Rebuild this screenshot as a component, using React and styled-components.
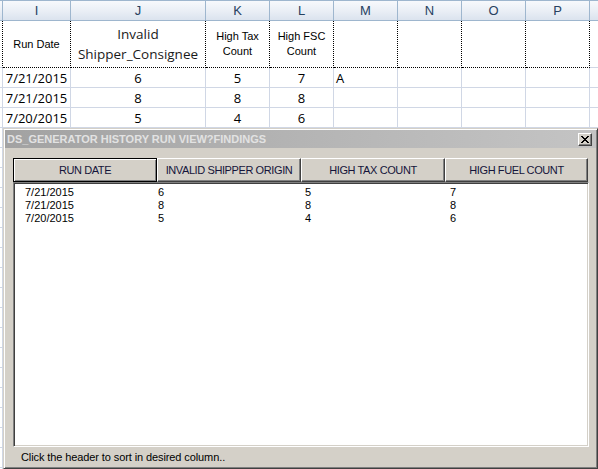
import React from "react";
import styled, { createGlobalStyle, css } from "styled-components";

const Global = createGlobalStyle`
  html, body { margin: 0; padding: 0; background: #ffffff; }
  body { overflow: hidden; }
  #root { position: relative; width: 598px; height: 469px; overflow: hidden; }
`;

const columns = [
  { key: "H", w: 3 },
  { key: "I", w: 68 },
  { key: "J", w: 135 },
  { key: "K", w: 64 },
  { key: "L", w: 64 },
  { key: "M", w: 64 },
  { key: "N", w: 64 },
  { key: "O", w: 64 },
  { key: "P", w: 64 },
  { key: "Q", w: 64 },
];

const Sheet = styled.div`
  display: flex;
  flex-direction: column;
  width: 598px;
  font-family: "Open Sans", "Liberation Sans", sans-serif;
  color: #000;
`;

const HeaderRow = styled.div`
  display: flex;
  height: 21px;
  border-top: 1px solid #9eb6ce;
  box-sizing: border-box;
`;

const HeadCell = styled.div`
  flex: 0 0 ${(p) => p.$w}px;
  box-sizing: border-box;
  border-right: 1px solid #9eb6ce;
  border-bottom: 1px solid #9eb6ce;
  background: linear-gradient(to bottom, #f7f9fc 0%, #e9eef5 55%, #dbe3ee 100%);
  display: flex;
  align-items: center;
  justify-content: center;
  font-family: "Liberation Sans", Arial, sans-serif;
  font-size: 13px;
  color: #27415f;
`;

const Row = styled.div`
  display: flex;
  height: ${(p) => p.$h}px;
`;

const Cell = styled.div`
  flex: 0 0 ${(p) => p.$w}px;
  box-sizing: border-box;
  border-right: 1px solid #d0d7e5;
  border-bottom: 1px solid #d0d7e5;
  display: flex;
  align-items: center;
  justify-content: ${(p) => (p.$left ? "flex-start" : "center")};
  padding-left: ${(p) => (p.$left ? "2px" : "0")};
  padding-top: 1px;
  font-size: 13px;
  white-space: nowrap;
  overflow: hidden;
`;

const TitleCell = styled.div`
  flex: 0 0 ${(p) => p.$w}px;
  box-sizing: border-box;
  border-right: 1px dotted #000;
  border-bottom: ${(p) => (p.$edge ? "1px solid #d0d7e5" : "1px dotted #000")};
  display: flex;
  flex-direction: column;
  align-items: center;
  justify-content: center;
  text-align: center;
  ${(p) =>
    p.$big
      ? css`
          font-family: "Open Sans", sans-serif;
          font-size: 13.5px;
          line-height: 20px;
          color: #1a1a1a;
        `
      : css`
          font-family: "Liberation Sans", Arial, sans-serif;
          font-size: 11px;
          line-height: 15px;
        `}
`;

/* ---- Dialog ---- */

const Dialog = styled.div`
  position: absolute;
  left: 3px;
  top: 128px;
  width: 595px;
  height: 341px;
  box-sizing: border-box;
  background: #d4d0c8;
  border: 1px solid;
  border-color: #d4d0c8 #404040 #404040 #d4d0c8;
  box-shadow: inset 1px 1px 0 #ffffff, inset -1px -1px 0 #808080;
  padding: 1px;
  display: flex;
  flex-direction: column;
  font-family: "Liberation Sans", Arial, sans-serif;
`;

const TitleBar = styled.div`
  height: 18px;
  flex: 0 0 18px;
  display: flex;
  align-items: center;
  justify-content: space-between;
  padding: 0 4px 0 2px;
  background: linear-gradient(to right, #a2a2a2 0%, #b4b4b4 50%, #c4c4c4 100%);
`;

const Title = styled.span`
  font-weight: bold;
  font-size: 11px;
  letter-spacing: 0px;
  color: #e2e2e2;
  white-space: nowrap;
`;

const CloseBtn = styled.button`
  width: 14px;
  height: 13px;
  padding: 0;
  margin: 0;
  box-sizing: border-box;
  background: #d4d0c8;
  border: 1px solid;
  border-color: #ffffff #404040 #404040 #ffffff;
  box-shadow: inset -1px -1px 0 #808080;
  display: flex;
  align-items: center;
  justify-content: center;
`;

const Body = styled.div`
  flex: 1;
  display: flex;
  flex-direction: column;
  padding: 10px 6px 0 8px;
`;

const HeaderBar = styled.div`
  display: flex;
  height: 24px;
`;

const ColButton = styled.button`
  flex: 0 0 ${(p) => p.$w}px;
  height: 24px;
  box-sizing: border-box;
  margin: 0;
  padding: 0;
  background: #d4d0c8;
  font-family: "Liberation Sans", Arial, sans-serif;
  font-size: 11px;
  letter-spacing: -0.4px;
  color: #14143a;
  display: flex;
  align-items: center;
  justify-content: center;
  ${(p) =>
    p.$focused
      ? css`
          border: 1px solid #000;
          box-shadow: inset 1px 1px 0 #ffffff, inset -1px -1px 0 #808080;
        `
      : css`
          border: 1px solid;
          border-color: #ffffff #404040 #404040 #ffffff;
          box-shadow: inset -1px -1px 0 #808080;
        `}
`;

const ListBox = styled.div`
  width: 576px;
  height: 265px;
  box-sizing: border-box;
  background: #ffffff;
  border: 1px solid;
  border-color: #808080 #ffffff #ffffff #808080;
  box-shadow: inset 1px 1px 0 #404040, inset -1px -1px 0 #d4d0c8;
  padding: 3px 2px 0 2px;
  display: flex;
  flex-direction: column;
`;

const ListRow = styled.div`
  display: grid;
  grid-template-columns: 133px 147px 145px 1fr;
  padding-left: 9px;
  height: 13px;
  line-height: 13px;
  font-size: 11px;
  color: #000;
`;

const Status = styled.div`
  flex: 1;
  display: flex;
  align-items: center;
  padding: 0 0 0 8px;
  font-size: 11px;
  letter-spacing: -0.1px;
  color: #000;
`;

const XIcon = () => (
  <svg width="8" height="7" viewBox="0 0 8 7" shapeRendering="crispEdges">
    <path
      d="M0 0h2v1h-2zM6 0h2v1h-2zM1 1h2v1h-2zM5 1h2v1h-2zM2 2h4v1h-4zM3 3h2v1h-2zM2 4h4v1h-4zM1 5h2v1h-2zM5 5h2v1h-2zM0 6h2v1h-2zM6 6h2v1h-2z"
      fill="#000"
    />
  </svg>
);

const dataRows = [
  ["7/21/2015", "6", "5", "7", "A"],
  ["7/21/2015", "8", "8", "8", ""],
  ["7/20/2015", "5", "4", "6", ""],
];

const listRows = [
  ["7/21/2015", "6", "5", "7"],
  ["7/21/2015", "8", "8", "8"],
  ["7/20/2015", "5", "4", "6"],
];

const headerButtons = [
  { label: "RUN DATE", w: 144, focused: true },
  { label: "INVALID SHIPPER ORIGIN", w: 144 },
  { label: "HIGH TAX COUNT", w: 144 },
  { label: "HIGH FUEL COUNT", w: 143 },
];

const titles = {
  I: { lines: ["Run Date"] },
  J: { lines: ["Invalid", "Shipper_Consignee"], big: true },
  K: { lines: ["High Tax", "Count"] },
  L: { lines: ["High FSC", "Count"] },
};

const dataKeys = { I: 0, J: 1, K: 2, L: 3, M: 4 };

export default function App() {
  const emptyRows = Array.from({ length: 18 });

  return (
    <>
      <Global />
      <Sheet>
        <HeaderRow>
          {columns.map((c) => (
            <HeadCell key={c.key} $w={c.w}>
              {c.key === "H" || c.key === "Q" ? "" : c.key}
            </HeadCell>
          ))}
        </HeaderRow>
        <Row $h={47}>
          {columns.map((c) =>
            c.key === "Q" ? (
              <Cell key={c.key} $w={c.w} />
            ) : (
              <TitleCell key={c.key} $w={c.w} $edge={c.key === "H"} $big={titles[c.key]?.big}>
                {(titles[c.key]?.lines || []).map((l) => (
                  <span key={l}>{l}</span>
                ))}
              </TitleCell>
            )
          )}
        </Row>
        {dataRows.map((r, i) => (
          <Row key={i} $h={20}>
            {columns.map((c) => (
              <Cell key={c.key} $w={c.w} $left={c.key === "M"}>
                {dataKeys[c.key] !== undefined ? r[dataKeys[c.key]] : ""}
              </Cell>
            ))}
          </Row>
        ))}
        {emptyRows.map((_, i) => (
          <Row key={"e" + i} $h={20}>
            {columns.map((c) => (
              <Cell key={c.key} $w={c.w} />
            ))}
          </Row>
        ))}
      </Sheet>

      <Dialog>
        <TitleBar>
          <Title>DS_GENERATOR HISTORY RUN VIEW?FINDINGS</Title>
          <CloseBtn aria-label="Close">
            <XIcon />
          </CloseBtn>
        </TitleBar>
        <Body>
          <HeaderBar>
            {headerButtons.map((b) => (
              <ColButton key={b.label} $w={b.w} $focused={b.focused}>
                {b.label}
              </ColButton>
            ))}
          </HeaderBar>
          <ListBox>
            {listRows.map((r, i) => (
              <ListRow key={i}>
                {r.map((v, j) => (
                  <span key={j}>{v}</span>
                ))}
              </ListRow>
            ))}
          </ListBox>
          <Status>Click the header to sort in desired column..</Status>
        </Body>
      </Dialog>
    </>
  );
}
